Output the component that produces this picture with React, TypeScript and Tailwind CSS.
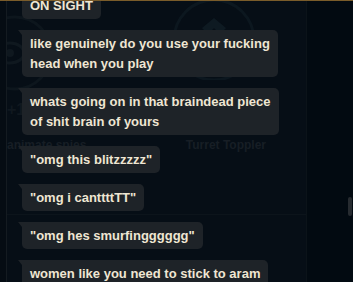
import React from "react";

const messages = [
  ["ON SIGHT"],
  ["like genuinely do you use your fucking", "head when you play"],
  ["whats going on in that braindead piece", "of shit brain of yours"],
  ['"omg this blitzzzzz"'],
  ['"omg i canttttTT"'],
  ['"omg hes smurfingggggg"'],
  ["women like you need to stick to aram"],
];

function Bubble({ lines }: { lines: string[] }) {
  return (
    <div className="relative self-start rounded-[5px] rounded-tl-none bg-[#1e2328] px-2 py-[3.5px] text-[13px] font-bold leading-[20px] text-[#efe6d3]">
      <span className="absolute left-[-4px] top-0 h-0 w-0 border-l-[4px] border-t-[5px] border-l-transparent border-t-[#1e2328]" />
      {lines.map((l, i) => (
        <div key={i} className="whitespace-nowrap">
          {l}
        </div>
      ))}
    </div>
  );
}

export default function App() {
  return (
    <div
      className="flex h-[283px] w-[353px] overflow-hidden border-t-2 border-t-[#7a5c2a] bg-[#060e16] mt-[-1px]"
      style={{ fontFamily: '"Liberation Sans", Arial, sans-serif' }}
    >
      <div className="w-[7px] shrink-0 border-r border-[#141b21] bg-[#050c13]" />
      <div className="relative flex-1 overflow-hidden">
        {/* faint client background seen through the chat */}
        <svg className="pointer-events-none absolute left-[-37px] top-[7px]" width="100" height="90" viewBox="0 0 100 90">
          <circle cx="45" cy="45" r="36" fill="none" stroke="#0d161d" strokeWidth="3" />
          <ellipse cx="40" cy="45" rx="14" ry="10" fill="none" stroke="#0f181f" strokeWidth="3" />
          <circle cx="40" cy="45" r="4" fill="#0f181f" />
        </svg>
        <svg className="pointer-events-none absolute left-[161px] top-[-1px]" width="95" height="80" viewBox="0 0 95 80">
          <circle cx="46" cy="40" r="40" fill="none" stroke="#0c171f" strokeWidth="3" />
          <path d="M34 28 L46 18 L58 28 L52 34 L46 28 L40 34 Z" fill="#0e1a22" />
        </svg>
        <div className="pointer-events-none absolute left-0 top-[97px] flex w-[299px] flex-col border-b border-[#0c141b] pb-[60px] text-[12px] font-bold">
          <div className="text-[16px] text-[#10181f]">+1</div>
          <div className="mt-[14px] flex justify-between pr-[40px] text-[#171e25]">
            <span>animate spies</span>
            <span>Turret Toppler</span>
          </div>
        </div>
        <div className="relative mt-[-9px] flex flex-col gap-[11px] pl-[15px]">
          {messages.map((m, i) => (
            <Bubble key={i} lines={m} />
          ))}
        </div>
      </div>
      <div className="relative w-[47px] shrink-0 border-l border-[#0b1319] bg-[#020a11]">
        <div className="absolute right-[1px] top-[196px] h-[19px] w-[4px] rounded-full bg-[#262b30]" />
      </div>
    </div>
  );
}
